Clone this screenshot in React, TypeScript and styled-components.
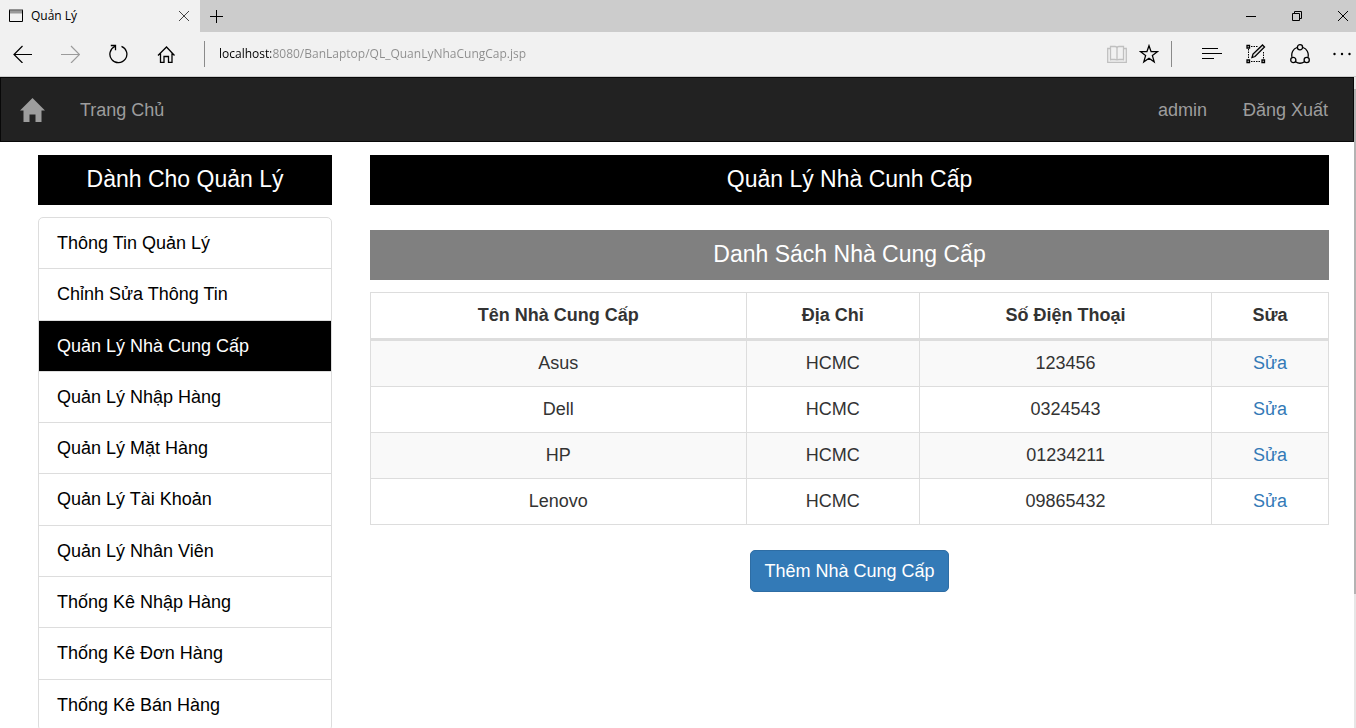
import React from "react";
import styled, { createGlobalStyle } from "styled-components";

const GlobalStyle = createGlobalStyle`
  *, *::before, *::after { box-sizing: border-box; }
  body {
    margin: 0;
    background: #fff;
    color: #333;
    font-family: "Liberation Sans", Arial, sans-serif;
    font-size: 18px;
    line-height: 26px;
  }
  a { text-decoration: none; }
`;

const Window = styled.div`
  display: flex;
  flex-direction: column;
  height: 100vh;
  overflow: hidden;
`;

/* ---------- browser chrome ---------- */

const Chrome = styled.header`
  flex: none;
  border-bottom: 1px solid #ccc;
  background: #f1f1f1;
  font-family: "Open Sans", "Noto Sans", sans-serif;
  font-size: 12px;
  line-height: 16px;
`;

const TabStrip = styled.div`
  display: flex;
  height: 32px;
  background: #ccc;
`;

const Tab = styled.div`
  display: flex;
  align-items: center;
  gap: 7px;
  width: 200px;
  padding: 0 4px 0 8px;
  background: #f1f1f1;
  color: #000;
`;

const TabTitle = styled.span`
  flex: 1;
`;

const IconButton = styled.button<{ $w: number; $dim?: boolean }>`
  display: flex;
  flex: none;
  align-items: center;
  justify-content: center;
  width: ${(p) => p.$w}px;
  height: 32px;
  padding: 0;
  border: 0;
  background: none;
  color: ${(p) => (p.$dim ? "#9b9b9b" : "#000")};
`;

const WindowControls = styled.div`
  display: flex;
  margin-left: auto;
  margin-right: -10px;
`;

const Toolbar = styled.div`
  display: flex;
  align-items: center;
  height: 44px;
  margin-right: -6px;
`;

const Rule = styled.span<{ $before?: number; $after: number }>`
  flex: none;
  width: 1px;
  height: 26px;
  margin-left: ${(p) => p.$before ?? 0}px;
  margin-right: ${(p) => p.$after}px;
  background: #8a8a8a;
`;

const Address = styled.input`
  flex: 1;
  min-width: 0;
  padding: 0;
  border: 0;
  outline: 0;
  background: linear-gradient(to right, #000 52px, #8c8c8c 52px);
  background-clip: text;
  -webkit-background-clip: text;
  color: transparent;
  font: inherit;
`;

const Svg = styled.svg`
  display: block;
  flex: none;
  fill: none;
  stroke: currentColor;
`;

/* ---------- page ---------- */

const Viewport = styled.div`
  display: flex;
  flex: 1;
  min-height: 0;
`;

const Page = styled.div`
  flex: 1;
  min-width: 0;
  overflow: hidden;
`;

const ScrollTrack = styled.div`
  width: 2px;
  padding-top: 12px;
  background: #e6e6e6;
`;

const ScrollThumb = styled.div`
  height: 79%;
  background: #b3b3b3;
`;

const Navbar = styled.nav`
  display: flex;
  align-items: center;
  height: 65px;
  padding: 0 25px 0 19px;
  border: 1px solid #080808;
  background: #222;
`;

const NavLink = styled.a<{ $gap?: number }>`
  display: block;
  margin-left: ${(p) => p.$gap ?? 0}px;
  color: #9d9d9d;
`;

const NavEnd = styled.div`
  display: flex;
  margin-left: auto;
`;

const Columns = styled.div`
  display: grid;
  grid-template-columns: minmax(0, 294fr) minmax(0, 959fr);
  gap: 38px;
  align-items: start;
  padding: 13px 25px 0 38px;
`;

const Banner = styled.h2<{ $tone: string }>`
  margin: 0 0 12px;
  padding: 8px 0 10px;
  background: ${(p) => p.$tone};
  color: #fff;
  font-size: 23px;
  font-weight: 400;
  line-height: 32px;
  text-align: center;
`;

const Menu = styled.ul`
  display: flex;
  flex-direction: column;
  min-height: 514px;
  margin: 0;
  padding: 0;
  border: 1px solid #ddd;
  border-radius: 5px;
  list-style: none;
`;

const MenuItem = styled.li`
  display: flex;
  flex: 1;
  & + & { border-top: 1px solid #ddd; }
`;

const MenuLink = styled.a<{ $active?: boolean }>`
  flex: 1;
  padding: 12px 18px;
  background: ${(p) => (p.$active ? "#000" : "transparent")};
  color: ${(p) => (p.$active ? "#fff" : "#000")};
`;

const Main = styled.main`
  text-align: center;
`;

const Section = styled.section`
  margin-top: 25px;
`;

const Table = styled.table`
  width: 100%;
  margin-bottom: 25px;
  border-collapse: collapse;
  table-layout: fixed;
  line-height: 25px;
`;

const Row = styled.tr`
  &:nth-child(odd) { background: #f9f9f9; }
`;

const HeadCell = styled.th<{ $share: string }>`
  width: ${(p) => p.$share};
  padding: 10px;
  border: 1px solid #ddd;
  border-bottom-width: 3px;
  background: #fff;
`;

const Cell = styled.td`
  padding: 10px;
  border: 1px solid #ddd;
`;

const EditLink = styled.a`
  color: #337ab7;
`;

const AddButton = styled.button`
  padding: 7px 13px;
  border: 1px solid #2e6da4;
  border-radius: 5px;
  background: #337ab7;
  color: #fff;
  font: inherit;
`;

const menu = [
  "Thông Tin Quản Lý",
  "Chỉnh Sửa Thông Tin",
  "Quản Lý Nhà Cung Cấp",
  "Quản Lý Nhập Hàng",
  "Quản Lý Mặt Hàng",
  "Quản Lý Tài Khoản",
  "Quản Lý Nhân Viên",
  "Thống Kê Nhập Hàng",
  "Thống Kê Đơn Hàng",
  "Thống Kê Bán Hàng",
];

const columns = [
  { label: "Tên Nhà Cung Cấp", share: "39.2%" },
  { label: "Địa Chỉ", share: "18.1%" },
  { label: "Số Điện Thoại", share: "30.5%" },
  { label: "Sửa", share: "12.2%" },
];

const suppliers = [
  { name: "Asus", city: "HCMC", phone: "123456" },
  { name: "Dell", city: "HCMC", phone: "0324543" },
  { name: "HP", city: "HCMC", phone: "01234211" },
  { name: "Lenovo", city: "HCMC", phone: "09865432" },
];

const BrowserChrome = () => (
  <Chrome>
    <TabStrip>
      <Tab>
        <Svg width="16" height="16" viewBox="0 0 16 16">
          <path d="M1 4h14" stroke="#999" strokeWidth="3" />
          <path d="M1.500 2v11.500h13V2" />
          <path d="M1 2h14" stroke="#333" />
        </Svg>
        <TabTitle>Quản Lý</TabTitle>
        <IconButton $w={24} aria-label="Close tab">
          <Svg width="12" height="12" viewBox="0 0 12 12">
            <path d="M1 1l10 10M11 1L1 11" stroke="#444" />
          </Svg>
        </IconButton>
      </Tab>
      <IconButton $w={32} aria-label="New tab">
        <Svg width="13" height="13" viewBox="0 0 13 13">
          <path d="M0 6.500h13M6.500 0v13" />
        </Svg>
      </IconButton>
      <WindowControls>
        <IconButton $w={46} aria-label="Minimize">
          <Svg width="10" height="10" viewBox="0 0 10 10">
            <path d="M0 5.500h10" />
          </Svg>
        </IconButton>
        <IconButton $w={46} aria-label="Restore">
          <Svg width="10" height="10" viewBox="0 0 10 10">
            <path d="M.5 2.500h7v7h-7zM2.500 2.500v-2h7v7h-2" />
          </Svg>
        </IconButton>
        <IconButton $w={46} aria-label="Close">
          <Svg width="10" height="10" viewBox="0 0 10 10">
            <path d="M0 0l10 10M10 0L0 10" />
          </Svg>
        </IconButton>
      </WindowControls>
    </TabStrip>
    <Toolbar>
      <IconButton $w={46} aria-label="Back">
        <Svg width="20" height="18" viewBox="0 0 20 18">
          <path d="M19 9.500H1M9.500 1L1 9.500 9.500 18" strokeWidth="1.200" />
        </Svg>
      </IconButton>
      <IconButton $w={48} $dim aria-label="Forward">
        <Svg width="20" height="18" viewBox="0 0 20 18">
          <path d="M1 9.500h18.500M11 1l8.500 8.500L11 18" strokeWidth="1.200" />
        </Svg>
      </IconButton>
      <IconButton $w={48} aria-label="Refresh">
        <Svg width="20" height="20" viewBox="0 0 20 20">
          <path d="M13.500 2.300A8.500 8.500 0 1 1 6.800 2.500M2.800 1.500h4.700v4.700" strokeWidth="1.300" />
        </Svg>
      </IconButton>
      <IconButton $w={48} aria-label="Home">
        <Svg width="18" height="18" viewBox="0 0 18 18">
          <path d="M1 10.500l8.500-8.500 8 8.500M3.500 8.500v8.800h3.500v-5.800h4.500v5.800h3.500V8.500" strokeWidth="1.300" />
        </Svg>
      </IconButton>
      <Rule $before={14} $after={14} />
      <Address
        aria-label="Address"
        defaultValue="localhost:8080/BanLaptop/QL_QuanLyNhaCungCap.jsp"
      />
      <IconButton $w={32} aria-label="Reading view">
        <Svg width="20" height="18" viewBox="0 0 20 18">
          <path
            d="M3.500 15.500v-14h4.500q2 0 2 2v12q0-1-2-1H3.500M16.500 15.500v-14H12q-2 0-2 2v12q0-1 2-1h4.500M3 3.500H.7v13.800h18.600V3.500H17"
            stroke="#c0c0c0"
            strokeWidth="1.300"
          />
        </Svg>
      </IconButton>
      <IconButton $w={32} aria-label="Add to favorites">
        <Svg width="20" height="20" viewBox="0 0 20 20">
          <path
            d="M10 1.700l2.100 5.900 6.400.1-5.100 3.900 1.800 6.300L10 14.300l-5.200 3.600 1.800-6.300-5.100-3.900 6.400-.1z"
            strokeWidth="1.300"
          />
        </Svg>
      </IconButton>
      <Rule $before={6} $after={18} />
      <IconButton $w={44} aria-label="Hub">
        <Svg width="20" height="12" viewBox="0 0 20 12">
          <path d="M0 .5h16M0 5.500h20M0 10.500h12" strokeWidth="1.200" />
        </Svg>
      </IconButton>
      <IconButton $w={44} aria-label="Make a web note">
        <Svg width="20" height="20" viewBox="0 0 20 20">
          <path d="M5 2.500h7M5 17.500h10M2.500 5v10M17.500 8v7" strokeDasharray="1.500 1" />
          <path d="M1 1.500h2.500v2.500H1zM1 16h2.500v2.500H1zM16 16h2.500v2.500H16z" strokeWidth="1.300" />
          <path d="M6 13.500l1-3.500 9.500-9 2 2L9 12.500z" fill="#ddd" strokeWidth="1.300" />
        </Svg>
      </IconButton>
      <IconButton $w={44} aria-label="Share">
        <Svg width="20" height="20" viewBox="0 0 20 20" strokeWidth="1.300">
          <path d="M7 3.500A8 8 0 0 0 2 13M13 3.500a8 8 0 0 1 5 9.500M5.500 17.700a8 8 0 0 0 9 0" />
          <circle cx="10" cy="3.300" r="2.600" />
          <circle cx="3.300" cy="16" r="2.600" />
          <circle cx="16.700" cy="16" r="2.600" />
        </Svg>
      </IconButton>
      <IconButton $w={40} aria-label="More">
        <Svg width="18" height="4" viewBox="0 0 18 4">
          <g fill="#000" stroke="none">
            <circle cx="1.500" cy="2" r="1.200" />
            <circle cx="9" cy="2" r="1.200" />
            <circle cx="16.500" cy="2" r="1.200" />
          </g>
        </Svg>
      </IconButton>
    </Toolbar>
  </Chrome>
);

const App = () => (
  <Window>
    <GlobalStyle />
    <BrowserChrome />
    <Viewport>
      <Page>
        <Navbar>
          <NavLink href="#" aria-label="Trang Chủ">
            <Svg width="25" height="24" viewBox="0 0 25 24">
              <path
                d="M12.500 0L25 12.500h-3.500V24h-6v-7.500h-6V24h-6V12.500H0z"
                fill="currentColor"
                stroke="none"
              />
            </Svg>
          </NavLink>
          <NavLink href="#" $gap={35}>Trang Chủ</NavLink>
          <NavEnd>
            <NavLink href="#">admin</NavLink>
            <NavLink href="#" $gap={36}>Đăng Xuất</NavLink>
          </NavEnd>
        </Navbar>
        <Columns>
          <aside>
            <Banner $tone="#000">Dành Cho Quản Lý</Banner>
            <Menu>
              {menu.map((label) => (
                <MenuItem key={label}>
                  <MenuLink href="#" $active={label === "Quản Lý Nhà Cung Cấp"}>
                    {label}
                  </MenuLink>
                </MenuItem>
              ))}
            </Menu>
          </aside>
          <Main>
            <Banner $tone="#000">Quản Lý Nhà Cunh Cấp</Banner>
            <Section>
              <Banner $tone="#808080">Danh Sách Nhà Cung Cấp</Banner>
              <Table>
                <thead>
                  <tr>
                    {columns.map((c) => (
                      <HeadCell key={c.label} scope="col" $share={c.share}>
                        {c.label}
                      </HeadCell>
                    ))}
                  </tr>
                </thead>
                <tbody>
                  {suppliers.map((s) => (
                    <Row key={s.name}>
                      <Cell>{s.name}</Cell>
                      <Cell>{s.city}</Cell>
                      <Cell>{s.phone}</Cell>
                      <Cell>
                        <EditLink href="#">Sửa</EditLink>
                      </Cell>
                    </Row>
                  ))}
                </tbody>
              </Table>
              <AddButton type="button">Thêm Nhà Cung Cấp</AddButton>
            </Section>
          </Main>
        </Columns>
      </Page>
      <ScrollTrack>
        <ScrollThumb />
      </ScrollTrack>
    </Viewport>
  </Window>
);

export default App;
